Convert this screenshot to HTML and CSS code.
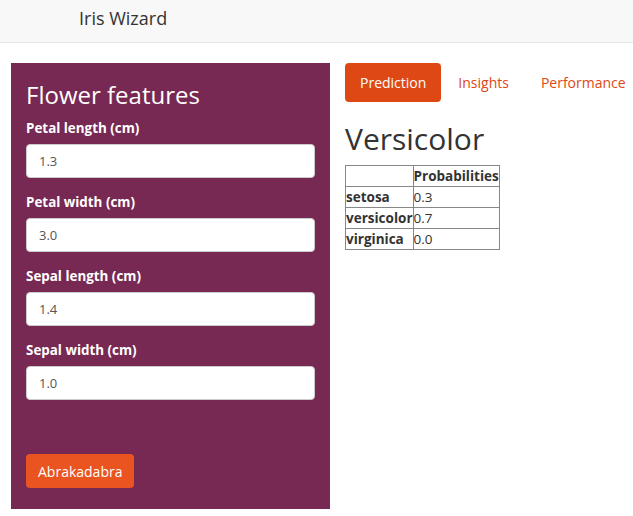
FILE: index.html
```html
<!DOCTYPE html>
<html>
<head>
<meta charset="utf-8">
<link rel="stylesheet" href="styles.css">
</head>
<body>
<nav class="navbar"><span class="brand">Iris Wizard</span></nav>
<div class="layout">
  <aside class="sidebar">
    <h2 class="side-title">Flower features</h2>
    <div class="field"><label>Petal length (cm)</label><input class="inp" value="1.3"></div>
    <div class="field"><label>Petal width (cm)</label><input class="inp" value="3.0"></div>
    <div class="field"><label>Sepal length (cm)</label><input class="inp" value="1.4"></div>
    <div class="field"><label>Sepal width (cm)</label><input class="inp" value="1.0"></div>
    <button class="btn">Abrakadabra</button>
  </aside>
  <main class="main">
    <ul class="pills">
      <li class="pill active">Prediction</li>
      <li class="pill">Insights</li>
      <li class="pill">Performance</li>
    </ul>
    <h1 class="result">Versicolor</h1>
    <table class="probs">
      <tr><th></th><th>Probabilities</th></tr>
      <tr><th>setosa</th><td>0.3</td></tr>
      <tr><th>versicolor</th><td>0.7</td></tr>
      <tr><th>virginica</th><td>0.0</td></tr>
    </table>
  </main>
</div>
</body>
</html>
```
FILE: styles.css
```css
* { box-sizing: border-box; }
html, body { margin: 0; padding: 0; }
body {
  font-family: "Open Sans", "DejaVu Sans", sans-serif;
  font-size: 14px;
  color: #333;
  background: #fff;
}
.navbar {
  height: 43px;
  background: #f8f8f8;
  border-bottom: 1px solid #e7e7e7;
  padding-left: 79px;
  display: flex;
  align-items: center;
}
.brand { font-size: 18px; color: #333; margin-top: -7px; }
.layout {
  display: flex;
  align-items: flex-start;
  padding: 20px 0 0 11px;
}
.sidebar {
  flex: none;
  width: 319px;
  height: 446px;
  background: #772953;
  padding: 19px 15px 0 15px;
  display: flex;
  flex-direction: column;
}
.side-title {
  margin: 0 0 10px 0;
  font-weight: 400;
  font-size: 24px;
  line-height: 26px;
  color: #fff;
}
.field { display: flex; flex-direction: column; margin-bottom: 14px; }
.field label {
  color: #fff;
  font-weight: 700;
  font-size: 13.4px;
  line-height: 20px;
  margin-bottom: 6px;
}
.inp {
  height: 34px;
  width: 100%;
  border: 1px solid #ccc;
  border-radius: 4px;
  padding: 6px 12px;
  font-family: inherit;
  font-size: 13px;
  color: #555;
  background: #fff;
}
.btn {
  margin-top: 40px;
  align-self: flex-start;
  height: 34px;
  padding: 0 12px;
  background: #e95420;
  color: #fff;
  border: none;
  border-radius: 4px;
  font-family: inherit;
  font-size: 14px;
}
.main { margin-left: 15px; flex: 1; }
.pills {
  list-style: none;
  margin: 0;
  padding: 0;
  display: flex;
  gap: 2px;
}
.pill {
  padding: 0 15px;
  height: 39px;
  line-height: 39px;
  font-size: 14px;
  color: #dd4814;
  border-radius: 4px;
}
.pill.active { background: #dd4814; color: #fff; }
.result {
  margin: 20px 0 10px 0;
  font-weight: 400;
  font-size: 30px;
  line-height: 33px;
  color: #333;
}
.probs {
  border-collapse: collapse;
  border: 1px solid #333;
  font-size: 13.5px;
}
.probs th, .probs td {
  border: 1px solid #888;
  padding: 0;
  height: 21px;
  text-align: left;
  line-height: 20px;
}
.probs th { font-weight: 700; }
```
